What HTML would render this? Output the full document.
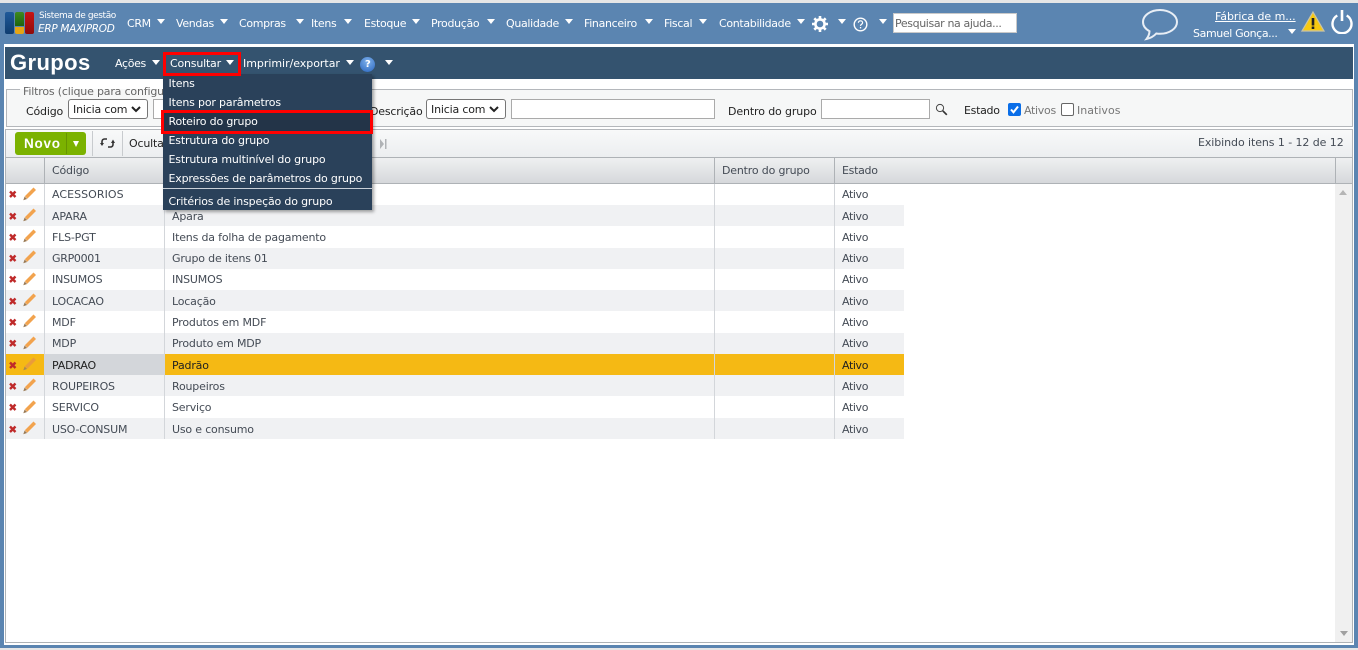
<!DOCTYPE html>
<html lang="pt"><head><meta charset="utf-8"><title>Grupos</title>
<style>
html,body{margin:0;padding:0;width:1358px;height:650px;overflow:hidden;background:#e6e6e6}
body{font-family:"DejaVu Sans","Liberation Sans",sans-serif;font-size:11px;letter-spacing:-.18px;color:#3d4450;position:relative}
div,span,svg,input{position:absolute;box-sizing:border-box}
.t{white-space:nowrap;line-height:14px;transform:translateY(1px)}
.m{color:#fff;top:16px;letter-spacing:-.33px}
.a{width:0;height:0;border-left:4.5px solid transparent;border-right:4.5px solid transparent;border-top:5px solid #fff;margin-left:.5px}
.mi{color:#fff;left:168.500px;white-space:nowrap;line-height:14px;letter-spacing:-.17px;transform:translateY(1px)}
.r{left:5px;width:899px;height:21.33px}
.c{white-space:nowrap;line-height:14px;color:#444b55;transform:translateY(1px)}
.v{width:1px;background:#d3d6da}
.ctl{background:#fff;border:1px solid #aaa;height:20px;top:99px}
.sel{border:1px solid #767676;border-radius:3px;background:#fff;color:#222;height:20px;top:99px;line-height:19px;padding-left:4px;white-space:nowrap}
.chev{right:6px;top:6px}
</style></head><body>
<div style="left:0;top:3px;width:1358px;height:645px;background:#5b85b1"></div>
<div style="left:4px;top:44px;width:1350px;height:601px;background:#fff"></div>
<div style="left:5px;top:47px;width:1348px;height:32px;background:#34536f"></div>

<!-- logo -->
<div style="left:5px;top:12px;width:9px;height:22px;background:linear-gradient(#1f5a9a,#0f3d70);border-radius:2px"></div>
<div style="left:15px;top:12px;width:9px;height:14px;background:linear-gradient(#3f8a1e,#1d6410);border-radius:2px 2px 0 0"></div>
<div style="left:15px;top:27px;width:9px;height:7px;background:#e5a514;border-radius:0 0 2px 2px"></div>
<div style="left:25px;top:12px;width:9px;height:22px;background:linear-gradient(#c81414,#8e0b0b);border-radius:2px"></div>
<div class="t" style="left:39px;top:9px;color:#fff;font-size:9px;letter-spacing:-.4px;line-height:13px">Sistema de gestão</div>
<div class="t" style="left:38px;top:21px;color:#fff;font-size:10.5px;letter-spacing:-.3px;font-style:italic">ERP MAXIPROD</div>

<!-- top menu -->
<div class="t m" style="left:127px">CRM</div><div class="a" style="left:156px;top:19px"></div>
<div class="t m" style="left:176px">Vendas</div><div class="a" style="left:219px;top:19px"></div>
<div class="t m" style="left:239px">Compras</div><div class="a" style="left:295px;top:19px"></div>
<div class="t m" style="left:311px">Itens</div><div class="a" style="left:343px;top:19px"></div>
<div class="t m" style="left:364px">Estoque</div><div class="a" style="left:411px;top:19px"></div>
<div class="t m" style="left:431px">Produção</div><div class="a" style="left:486px;top:19px"></div>
<div class="t m" style="left:506px">Qualidade</div><div class="a" style="left:564px;top:19px"></div>
<div class="t m" style="left:584px">Financeiro</div><div class="a" style="left:644px;top:19px"></div>
<div class="t m" style="left:664px">Fiscal</div><div class="a" style="left:698px;top:19px"></div>
<div class="t m" style="left:719px">Contabilidade</div><div class="a" style="left:796px;top:19px"></div>
<svg style="left:812px;top:16px" width="16" height="16" viewBox="0 0 16 16"><circle cx="8" cy="8" r="4.6" fill="none" stroke="#fff" stroke-width="2.6"/><g stroke="#fff" stroke-width="2.6"><path d="M8 0v3M8 13v3M0 8h3M13 8h3M2.3 2.3l2.1 2.1M11.6 11.6l2.1 2.1M2.3 13.7l2.1-2.1M11.6 4.4l2.1-2.1"/></g></svg>
<div class="a" style="left:837px;top:19px"></div>
<svg style="left:853px;top:17px" width="15" height="15" viewBox="0 0 15 15"><circle cx="7.5" cy="7.5" r="6.3" fill="none" stroke="#fff" stroke-width="1.4"/><path d="M5.4 5.8c0-1.3 1-2 2.1-2s2.1.7 2.1 1.9c0 1.5-2.1 1.6-2.1 3.2" fill="none" stroke="#fff" stroke-width="1.2"/><rect x="6.9" y="10" width="1.3" height="1.4" fill="#fff"/></svg>
<div class="a" style="left:878px;top:19px"></div>
<div class="t" style="left:893px;top:13px;width:124px;height:20px;background:#fff;border:1px solid #c9c9c9;color:#666;line-height:18px;padding-left:1px;overflow:hidden;letter-spacing:-.38px;transform:none"><span style="position:static;display:block;margin-top:1px">Pesquisar na ajuda...</span></div>

<svg style="left:1141px;top:8px" width="38" height="33" viewBox="0 0 38 33"><path d="M19 2C9.500 2 2 7.500 2 14c0 3.800 2.500 7 6.500 9.200C8.400 26 7.500 28.500 5.500 31c4-.8 7.500-3 9.800-5.500 1.200.2 2.400.3 3.700.3 9.500 0 17-5.300 17-11.800S28.500 2 19 2z" fill="none" stroke="#e8eef5" stroke-width="2"/></svg>
<div class="t" style="left:1215px;top:9px;color:#fff;text-decoration:underline;letter-spacing:-.05px">Fábrica de m...</div>
<div class="t" style="left:1193px;top:26px;color:#fff;letter-spacing:-.38px">Samuel Gonça...</div>
<div class="a" style="left:1287px;top:29px"></div>
<svg style="left:1301px;top:11px" width="24" height="21" viewBox="0 0 24 21"><path d="M12 1L23 20H1z" fill="#f7c911" stroke="#c9c4a8" stroke-width="1.200"/><rect x="10.700" y="7" width="2.600" height="7.500" fill="#222"/><rect x="10.700" y="15.500" width="2.600" height="2.500" fill="#222"/></svg>
<svg style="left:1330px;top:9px" width="24" height="25" viewBox="0 0 24 25"><path d="M7.300 6.500a9.500 9.500 0 1 0 9.400 0" fill="none" stroke="#fff" stroke-width="2.400"/><path d="M12 1v11" stroke="#fff" stroke-width="2.600"/></svg>

<!-- title bar -->
<div class="t" style="left:10px;top:50px;color:#fff;font-family:'Liberation Sans',sans-serif;font-weight:bold;font-size:22px;letter-spacing:.4px;line-height:26px;transform:none">Grupos</div>
<div class="t m" style="left:115px;top:56px">Ações</div><div class="a" style="left:151px;top:60px"></div>
<div class="t m" style="left:170px;top:56px;letter-spacing:-.2px">Consultar</div><div class="a" style="left:225px;top:60px"></div>
<div class="t m" style="left:243px;top:56px;letter-spacing:-.03px">Imprimir/exportar</div><div class="a" style="left:345px;top:60px"></div>
<div style="left:360px;top:57px;width:15px;height:15px;border-radius:50%;background:radial-gradient(circle at 50% 30%,#7db0ea,#2a66c0)"></div>
<div class="t" style="left:365px;top:57px;color:#fff;font-weight:bold;font-size:10px;letter-spacing:0">?</div>
<div class="a" style="left:384px;top:60px"></div>

<!-- filters -->
<div style="left:6px;top:89px;width:1347px;height:38px;border:1px solid #b4b7bb;background:#f6f7f7"></div>
<div class="t" style="left:20px;top:84px;padding:0 3px;background:linear-gradient(#fff 4px,#f6f7f7 4px);color:#666">Filtros (clique para configurar)</div>
<div class="t" style="left:26px;top:104px;color:#222">Código</div>
<div class="sel" style="left:68px;width:80px">Inicia com<svg class="chev" width="10" height="7" viewBox="0 0 10 7"><path d="M1 1l4 4 4-4" fill="none" stroke="#222" stroke-width="2"/></svg></div>
<div class="ctl" style="left:153px;width:60px"></div>
<div class="t" style="left:370px;top:104px;color:#222">Descrição</div>
<div class="sel" style="left:426px;width:80px">Inicia com<svg class="chev" width="10" height="7" viewBox="0 0 10 7"><path d="M1 1l4 4 4-4" fill="none" stroke="#222" stroke-width="2"/></svg></div>
<div class="ctl" style="left:511px;width:204px"></div>
<div class="t" style="left:728px;top:104px;color:#222;letter-spacing:-.12px">Dentro do grupo</div>
<div class="ctl" style="left:821px;width:109px"></div>
<svg style="left:935px;top:103px" width="13" height="13" viewBox="0 0 13 13"><circle cx="5" cy="5" r="3.600" fill="none" stroke="#444" stroke-width="1"/><path d="M7.800 7.800l4 4" stroke="#333" stroke-width="1.700"/></svg>
<div class="t" style="left:964px;top:103px;color:#222;letter-spacing:-.3px">Estado</div>
<div style="left:1008px;top:103px;width:13px;height:13px;background:#0a6ee8;border-radius:2px"></div>
<svg style="left:1008px;top:103px" width="13" height="13" viewBox="0 0 13 13"><path d="M3 6.500l2.500 2.800L10 3.500" fill="none" stroke="#fff" stroke-width="2"/></svg>
<div class="t" style="left:1024px;top:103px;color:#777;letter-spacing:-.3px">Ativos</div>
<div style="left:1061px;top:103px;width:13px;height:13px;background:#fff;border:1px solid #666;border-radius:2px"></div>
<div class="t" style="left:1077px;top:103px;color:#777;letter-spacing:.02px">Inativos</div>

<!-- toolbar -->
<div style="left:5px;top:129px;width:1348px;height:29px;border:1px solid #b4b7bb;background:linear-gradient(#f8f9f9,#eceef0)"></div>
<div style="left:15px;top:132px;width:71px;height:23px;border-radius:3px;background:#7bb200"></div>
<div style="left:66px;top:133px;width:1px;height:21px;background:#679500"></div>
<div class="t" style="left:24px;top:136px;color:#fff;font-family:'Liberation Sans',sans-serif;font-weight:bold;font-size:13.500px;letter-spacing:.75px">Novo</div>
<div style="left:73px;top:141px;width:0;height:0;border-left:3.500px solid transparent;border-right:3.500px solid transparent;border-top:6px solid #fff"></div>
<div class="v" style="left:92px;top:131px;height:25px;background:#c8cbce"></div>
<div class="v" style="left:122px;top:131px;height:25px;background:#c8cbce"></div>
<svg style="left:100px;top:136px" width="15" height="14" viewBox="0 0 15 14"><path d="M7 3H4.500A2.500 2.500 0 0 0 2 5.500V8M8 11h2.500A2.500 2.500 0 0 0 13 8.500V6" fill="none" stroke="#333" stroke-width="1.600"/><path d="M0 7h4L2 10zM11 7h4l-2-3.500z" fill="#333"/></svg>
<div class="t" style="left:129px;top:136px;color:#222">Ocultar</div>
<svg style="left:379px;top:139px" width="8" height="10" viewBox="0 0 8 10"><path d="M1 0l4 5-4 5z" fill="#b0b3b6"/><rect x="6" y="0" width="1.500" height="10" fill="#b0b3b6"/></svg>
<div class="t" style="left:1198px;top:135px;color:#444b55;letter-spacing:-.08px">Exibindo itens 1 - 12 de 12</div>

<!-- table frame -->
<div style="left:5px;top:157px;width:1348px;height:486px;border:1px solid #aeb2b6;background:#fff"></div>
<div style="left:6px;top:158px;width:1346px;height:26px;background:linear-gradient(#eff0f1,#d6d8db);border-bottom:1px solid #aeb2b6"></div>
<div class="v" style="left:44px;top:158px;height:26px;background:#aeb2b6"></div>
<div class="v" style="left:164px;top:158px;height:26px;background:#aeb2b6"></div>
<div class="v" style="left:714px;top:158px;height:26px;background:#aeb2b6"></div>
<div class="v" style="left:834px;top:158px;height:26px;background:#aeb2b6"></div>
<div class="v" style="left:1335px;top:158px;height:26px;background:#aeb2b6"></div>
<div class="c" style="left:52px;top:163px">Código</div>
<div class="c" style="left:722px;top:163px">Dentro do grupo</div>
<div class="c" style="left:842px;top:163px;letter-spacing:-.3px">Estado</div>
<div style="left:1335px;top:184px;width:17px;height:458px;background:#f0f0f0"></div>
<div style="left:1339px;top:190px;width:0;height:0;border-left:4px solid transparent;border-right:4px solid transparent;border-bottom:5px solid #b5b5b5"></div>
<div style="left:1340px;top:631px;width:0;height:0;border-left:4px solid transparent;border-right:4px solid transparent;border-top:5px solid #a0a0a0"></div>

<!-- row backgrounds -->
<div class="r" style="top:205px;background:#f0f1f3;left:6px;width:898px"></div>
<div class="r" style="top:248px;background:#f0f1f3;left:6px;width:898px"></div>
<div class="r" style="top:290px;background:#f0f1f3;left:6px;width:898px"></div>
<div class="r" style="top:333px;background:#f0f1f3;left:6px;width:898px"></div>
<div class="r" style="top:354px;background:#f5b914;left:6px;width:898px;height:21px"></div>
<div class="r" style="top:354px;background:#d3d6da;left:45px;width:119px;height:21px"></div>
<div class="r" style="top:375px;background:#f0f1f3;left:6px;width:898px"></div>
<div class="r" style="top:418px;background:#f0f1f3;left:6px;width:898px"></div>
<div class="v" style="left:44px;top:184px;height:255px"></div>
<div class="v" style="left:164px;top:184px;height:255px"></div>
<div class="v" style="left:714px;top:184px;height:255px"></div>
<div class="v" style="left:834px;top:184px;height:255px"></div>

<!-- rows -->
<div class="c" style="left:52px;top:187px;letter-spacing:.05px">ACESSORIOS</div><div class="c" style="left:842px;top:187px;letter-spacing:-.38px">Ativo</div>
<div class="c" style="left:52px;top:209px">APARA</div><div class="c" style="left:172px;top:209px">Apara</div><div class="c" style="left:842px;top:209px;letter-spacing:-.38px">Ativo</div>
<div class="c" style="left:52px;top:230px">FLS-PGT</div><div class="c" style="left:172px;top:230px">Itens da folha de pagamento</div><div class="c" style="left:842px;top:230px;letter-spacing:-.38px">Ativo</div>
<div class="c" style="left:52px;top:251px;letter-spacing:-.3px">GRP0001</div><div class="c" style="left:172px;top:251px">Grupo de itens 01</div><div class="c" style="left:842px;top:251px;letter-spacing:-.38px">Ativo</div>
<div class="c" style="left:52px;top:272px">INSUMOS</div><div class="c" style="left:172px;top:272px">INSUMOS</div><div class="c" style="left:842px;top:272px;letter-spacing:-.38px">Ativo</div>
<div class="c" style="left:52px;top:294px">LOCACAO</div><div class="c" style="left:172px;top:294px">Locação</div><div class="c" style="left:842px;top:294px;letter-spacing:-.38px">Ativo</div>
<div class="c" style="left:52px;top:315px">MDF</div><div class="c" style="left:172px;top:315px">Produtos em MDF</div><div class="c" style="left:842px;top:315px;letter-spacing:-.38px">Ativo</div>
<div class="c" style="left:52px;top:336px">MDP</div><div class="c" style="left:172px;top:336px">Produto em MDP</div><div class="c" style="left:842px;top:336px;letter-spacing:-.38px">Ativo</div>
<div class="c" style="left:52px;top:358px;color:#222">PADRAO</div><div class="c" style="left:172px;top:358px;color:#222">Padrão</div><div class="c" style="left:842px;top:358px;color:#222;letter-spacing:-.38px">Ativo</div>
<div class="c" style="left:52px;top:379px">ROUPEIROS</div><div class="c" style="left:172px;top:379px">Roupeiros</div><div class="c" style="left:842px;top:379px;letter-spacing:-.38px">Ativo</div>
<div class="c" style="left:52px;top:400px">SERVICO</div><div class="c" style="left:172px;top:400px">Serviço</div><div class="c" style="left:842px;top:400px;letter-spacing:-.38px">Ativo</div>
<div class="c" style="left:52px;top:422px">USO-CONSUM</div><div class="c" style="left:172px;top:422px">Uso e consumo</div><div class="c" style="left:842px;top:422px;letter-spacing:-.38px">Ativo</div>

<!-- row icons -->
<svg style="left:8px;top:186px" width="32" height="253" viewBox="0 0 32 253">
<defs>
<g id="x"><path d="M2 3.500l5.500 5.500M7.500 3.500L2 9" stroke="#bf2a2a" stroke-width="2.400" fill="none"/></g>
<g id="p"><path d="M16.800 11.300L25.500 2.500l2.500 2.500-8.700 8.800z" fill="#f2a34e"/><path d="M15.300 15.200l1.300-3.700 2.500 2.500z" fill="#9a7a55"/></g>
<g id="q"><path d="M16.800 11.300L25.500 2.500l2.500 2.500-8.700 8.800z" fill="#ea9c3a"/><path d="M15.300 15.200l1.300-3.700 2.500 2.500z" fill="#a98a50"/></g>
</defs>
<use href="#x" y="2"/><use href="#p" y="-1"/>
<use href="#x" y="24"/><use href="#p" y="20"/>
<use href="#x" y="45"/><use href="#p" y="41"/>
<use href="#x" y="66"/><use href="#p" y="62"/>
<use href="#x" y="87"/><use href="#p" y="84"/>
<use href="#x" y="109"/><use href="#p" y="105"/>
<use href="#x" y="130"/><use href="#p" y="126"/>
<use href="#x" y="151"/><use href="#p" y="148"/>
<use href="#x" y="173"/><use href="#q" y="169"/>
<use href="#x" y="194"/><use href="#p" y="190"/>
<use href="#x" y="215"/><use href="#p" y="212"/>
<use href="#x" y="237"/><use href="#p" y="233"/>
</svg>

<!-- dropdown -->
<div style="left:163px;top:74px;width:209px;height:136px;background:#2a415a;box-shadow:2px 2px 3px rgba(0,0,0,.35)"></div>
<div style="left:163px;top:188px;width:209px;height:1px;background:#c9d0d8"></div>
<div style="left:163px;top:112px;width:209px;height:19px;background:#233448"></div>
<div class="mi" style="top:76px">Itens</div>
<div class="mi" style="top:95px">Itens por parâmetros</div>
<div class="mi" style="top:114px">Roteiro do grupo</div>
<div class="mi" style="top:133px">Estrutura do grupo</div>
<div class="mi" style="top:152px">Estrutura multinível do grupo</div>
<div class="mi" style="top:171px">Expressões de parâmetros do grupo</div>
<div class="mi" style="top:194px">Critérios de inspeção do grupo</div>

<!-- red highlights -->
<div style="left:163px;top:52px;width:78px;height:24px;border:3px solid #f00"></div>
<div style="left:161px;top:110px;width:212px;height:24px;border:3px solid #f00"></div>
</body></html>
